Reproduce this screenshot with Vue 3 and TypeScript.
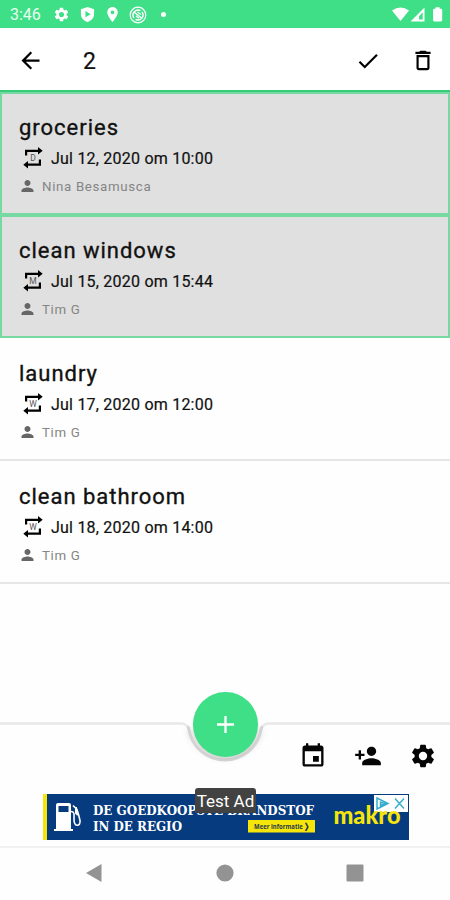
<script setup lang="ts">
interface Task {
  title: string
  repeat: string
  date: string
  person: string
  selected: boolean
}

const tasks: Task[] = [
  { title: 'groceries', repeat: 'D', date: 'Jul 12, 2020 om 10:00', person: 'Nina Besamusca', selected: true },
  { title: 'clean windows', repeat: 'M', date: 'Jul 15, 2020 om 15:44', person: 'Tim G', selected: true },
  { title: 'laundry', repeat: 'W', date: 'Jul 17, 2020 om 12:00', person: 'Tim G', selected: false },
  { title: 'clean bathroom', repeat: 'W', date: 'Jul 18, 2020 om 14:00', person: 'Tim G', selected: false },
]

const gear =
  'M19.14 12.94c.04-.3.06-.61.06-.94 0-.32-.02-.64-.07-.94l2.03-1.58a.49.49 0 0 0 .12-.61l-1.92-3.32a.488.488 0 0 0-.59-.22l-2.39.96c-.5-.38-1.03-.7-1.62-.94l-.36-2.54a.484.484 0 0 0-.48-.41h-3.84c-.24 0-.43.17-.47.41l-.36 2.54c-.59.24-1.13.57-1.62.94l-2.39-.96c-.22-.08-.47 0-.59.22L2.74 8.87c-.12.21-.08.47.12.61l2.03 1.58c-.05.3-.09.63-.09.94s.02.64.07.94l-2.03 1.58a.49.49 0 0 0-.12.61l1.92 3.32c.12.22.37.29.59.22l2.39-.96c.5.38 1.03.7 1.62.94l.36 2.54c.05.24.24.41.48.41h3.84c.24 0 .44-.17.47-.41l.36-2.54c.59-.24 1.13-.56 1.62-.94l2.39.96c.22.08.47 0 .59-.22l1.92-3.32c.12-.22.07-.47-.12-.61l-2.01-1.58zM12 15.6A3.6 3.6 0 1 1 12 8.4a3.6 3.6 0 0 1 0 7.2z'
</script>

<template>
  <div class="screen">
    <header class="status">
      <span class="clock">3:46</span>
      <svg class="s-gear" viewBox="0 0 24 24"><path :d="gear" /></svg>
      <svg class="s-shield" viewBox="0 0 16 18"><path fill-rule="evenodd" d="M8 1 15 3.3V9c0 3.700-3 6.400-7 8-4-1.600-7-4.300-7-8V3.300zM5.800 5.200v6.800l5.600-3.400z" /></svg>
      <svg class="s-pin" viewBox="5 2 14 20"><path d="M12 2C8.130 2 5 5.130 5 9c0 5.250 7 13 7 13s7-7.750 7-13c0-3.870-3.130-7-7-7zm0 9.500a2.500 2.500 0 1 1 0-5 2.500 2.500 0 0 1 0 5z" /></svg>
      <svg class="s-sync" viewBox="0 0 18 18">
        <g fill="none" stroke="#fff"><circle cx="9" cy="9" r="7.800" stroke-width="1.200" /><path stroke-width="1.400" d="M5 12A5 5 0 0 1 11.500 4.700M13 6A5 5 0 0 1 6.500 13.300M5.500 6.500l7 5.500M7 10l3 2.300M8.500 6l3.300 2.500" /></g>
      </svg>
      <i class="s-dot"></i>
      <svg class="s-net" viewBox="0 0 52 18">
        <path d="M1 4.500Q9.500-1.500 18 4.500L9.500 15z" />
        <path fill-rule="evenodd" d="M19.500 15.500 33.500 1.500v14zM28 13.500h3.700V6.500L28 10.200z" />
        <path d="M44.500 1.200h4.200v1.600h1.100c.9 0 1.400.5 1.400 1.400v9.900c0 .9-.5 1.400-1.400 1.400h-6.300c-.9 0-1.400-.5-1.400-1.400V4.200c0-.9.500-1.400 1.400-1.400h1z" />
      </svg>
    </header>

    <div class="toolbar">
      <svg class="back" viewBox="0 0 24 24"><path d="M20 11H7.830l5.590-5.590L12 4l-8 8 8 8 1.410-1.410L7.830 13H20z" /></svg>
      <span class="count">2</span>
      <svg class="check" viewBox="0 0 24 24"><path d="M9 16.170 4.830 12l-1.420 1.410L9 19 21 7l-1.410-1.410z" /></svg>
      <svg class="trash" viewBox="0 0 24 24"><path fill-rule="evenodd" d="M6 19c0 1.100.9 2 2 2h8c1.100 0 2-.9 2-2V7H6zM8 9h8v10H8zM15.500 4l-1-1h-5l-1 1H5v2h14V4z" /></svg>
    </div>

    <main class="list">
      <article v-for="task in tasks" :key="task.title" class="task" :class="{ selected: task.selected }">
        <h2>{{ task.title }}</h2>
        <div class="date">
          <svg viewBox="0 0 20 22">
            <path d="M2 8.500V2.700h13V0l4.700 3.800L15 7.500V4.900H4.200v3.600zM18 12.500v6.300H5v2.700L.3 17.700 5 14v2.600h10.800v-4.100z" />
            <text x="10" y="13.800" text-anchor="middle">{{ task.repeat }}</text>
          </svg>
          <span>{{ task.date }}</span>
        </div>
        <div class="person">
          <svg viewBox="4 4 16 16"><path d="M12 12c2.210 0 4-1.790 4-4s-1.790-4-4-4-4 1.790-4 4 1.790 4 4 4zm0 2c-2.670 0-8 1.340-8 4v2h16v-2c0-2.660-5.330-4-8-4z" /></svg>
          <span>{{ task.person }}</span>
        </div>
      </article>
    </main>

    <div class="bottom">
      <svg class="edge" viewBox="0 0 450 60">
        <path class="haze" d="M190 20A37 37 0 0 0 260 20" />
        <path class="rim" d="M0 13.500H181q5 0 8 5M261 18.500q3-5 8-5H450" />
        <path class="notch" d="M187.500 16.500q1 1 1.500 3A36.500 36.500 0 0 0 261 19.500q.5-2 1.500-3" />
      </svg>
      <button class="fab" aria-label="Add"><svg viewBox="0 0 18 18"><path d="M7.800 0h2.400v7.800H18v2.400h-7.800V18H7.800v-7.800H0V7.800h7.800z" /></svg></button>
      <nav class="actions">
        <svg class="a-cal" viewBox="0 0 24 24"><path fill-rule="evenodd" d="M19 3h-1V1h-2v2H8V1H6v2H5c-1.110 0-2 .9-2 2v14c0 1.100.89 2 2 2h14c1.100 0 2-.9 2-2V5c0-1.100-.9-2-2-2zm0 16H5V8h14zM12 12h5v5h-5z" /></svg>
        <svg class="a-add" viewBox="0 0 24 24"><path d="M15 12c2.210 0 4-1.790 4-4s-1.790-4-4-4-4 1.790-4 4 1.790 4 4 4zM6 10V7H4v3H1v2h3v3h2v-3h3v-2zm9 4c-2.670 0-8 1.340-8 4v2h16v-2c0-2.660-5.330-4-8-4z" /></svg>
        <svg class="a-gear" viewBox="0 0 24 24"><path :d="gear" /></svg>
      </nav>
    </div>

    <div class="ad-row">
      <div class="ad">
        <svg class="ad-art" viewBox="0 0 366 46">
          <rect width="366" height="46" fill="#063b80" />
          <rect width="4" height="46" fill="#f5e50a" />
          <g fill="none" stroke="#fff" stroke-width="1.600">
            <path d="M28 17.500c4 0 3 4 3 8 0 8 7 7 6 1-1-5-2-8-3-11l-4-4" />
            <path stroke-width="2" d="M33 13v6l2 2" />
          </g>
          <path fill="#fff" fill-rule="evenodd" d="M13 11q0-2 2-2h11q2 0 2 2v24h2v2H11v-2h2zM15.500 12v6h10v-6z" />
          <text class="slab" x="50" y="21" textLength="221" lengthAdjust="spacingAndGlyphs">DE GOEDKOOPSTE BRANDSTOF</text>
          <text class="slab" x="50" y="37" textLength="89" lengthAdjust="spacingAndGlyphs">IN DE REGIO</text>
          <rect x="205" y="26" width="67" height="12.500" fill="#f5e50a" />
          <text class="more" x="211" y="35" textLength="56" lengthAdjust="spacingAndGlyphs">Meer informatie ❯</text>
          <path d="M331 1h34v17h-34z" fill="#fff" />
          <text class="makro" x="290.500" y="30" textLength="67" lengthAdjust="spacingAndGlyphs">makro</text>
          <g fill="none" stroke="#36aecb" stroke-width="1.500"><path d="M334 4v11l11-5.500zM337.500 8v3.500l4-2zM352 4.500l9 10M361 4.500l-9 10" /></g>
        </svg>
        <span class="test">Test Ad</span>
      </div>
    </div>

    <footer class="sysnav">
      <svg viewBox="0 0 18 20"><path d="M16.500 1v18L1 10z" /></svg>
      <svg viewBox="0 0 18 20"><circle cx="9" cy="10" r="8.600" /></svg>
      <svg viewBox="0 0 18 20"><rect x=".5" y="1.500" width="17" height="17" rx="1" /></svg>
    </footer>
  </div>
</template>

<style>
body {
  background: #fff;
}
</style>

<style scoped>
* {
  box-sizing: border-box;
}
.screen {
  width: 450px;
  height: 900px;
  display: flex;
  flex-direction: column;
  overflow: hidden;
  background: #fefefe;
  font-family: Roboto, sans-serif;
  color: #111;
}
svg {
  display: block;
  flex: none;
}
.status {
  height: 28px;
  flex: none;
  display: flex;
  align-items: center;
  padding: 1px 7px 0 10px;
  background: #3fdf87;
  fill: #fff;
  color: #e9fff2;
}
.clock {
  width: 44px;
  font-size: 16px;
  line-height: 20px;
}
.s-gear { width: 17px; height: 17px; margin-left: -1px; }
.s-shield { width: 15px; height: 17px; margin-left: 10px; }
.s-pin { width: 11px; height: 15px; margin-left: 12px; }
.s-sync { width: 18px; height: 18px; margin-left: 11px; }
.s-dot {
  width: 5px;
  height: 5px;
  margin-left: 14px;
  border-radius: 50%;
  background: #fff;
}
.s-net { width: 52px; height: 18px; margin-left: auto; }
.toolbar {
  height: 62px;
  flex: none;
  display: flex;
  align-items: center;
  padding: 3px 14px 0 17px;
  background: #fff;
}
.back { width: 27px; height: 27px; }
.count {
  margin-left: 39px;
  font-size: 23px;
  line-height: 30px;
  padding-top: 2px;
  -webkit-text-stroke: 0.2px #111;
}
.check { width: 26px; height: 26px; margin-left: auto; }
.trash { width: 26px; height: 27px; margin-left: 29px; }
.list {
  flex: none;
  border-top: 2px solid #35cc79;
}
.task {
  height: 123px;
  padding: 21px 19px 0;
  border-bottom: 2px solid #e6e6e6;
}
.task.selected {
  background: #e0e0e0;
  border: 2px solid #77d9a2;
  padding: 19px 17px 0;
}
h2 {
  margin: 0;
  font-size: 22px;
  line-height: 29px;
  font-weight: 400;
  letter-spacing: 0.98px;
  -webkit-text-stroke: 0.35px #111;
}
.date {
  display: flex;
  align-items: center;
  height: 22px;
  margin-top: 5px;
  padding-left: 4px;
  font-size: 16px;
  letter-spacing: 0.22px;
  -webkit-text-stroke: 0.2px #111;
}
.date svg {
  width: 20px;
  height: 22px;
  margin-right: 8px;
}
.date text {
  font: 8.5px Roboto, sans-serif;
  letter-spacing: 0;
  fill: #555;
  -webkit-text-stroke: 0;
}
.person {
  display: flex;
  align-items: center;
  height: 20px;
  margin-top: 7px;
  padding-left: 2px;
  font-size: 13.3px;
  letter-spacing: 0.66px;
  color: #858585;
}
.person svg {
  width: 13px;
  height: 12px;
  margin-right: 8px;
  fill: #666;
}
.bottom {
  position: relative;
  height: 80px;
  flex: none;
  margin-top: 130px;
}
.edge {
  position: absolute;
  left: 0;
  top: -4px;
  width: 450px;
  height: 60px;
  overflow: visible;
  fill: none;
}
.rim { stroke: #e8e8e8; stroke-width: 2.5; }
.notch { stroke: #d3d3d3; stroke-width: 3; }
.haze { stroke: #dedede; stroke-width: 6; filter: blur(3px); }
.fab {
  position: absolute;
  left: 193px;
  top: -22px;
  width: 64.5px;
  height: 64.5px;
  padding: 0;
  display: grid;
  place-items: center;
  border: 0;
  border-radius: 50%;
  background: #3fdf87;
  box-shadow: 0 2px 2px #00000018;
}
.fab svg { width: 17px; height: 17px; fill: #fff; }
.actions {
  display: flex;
  align-items: center;
  justify-content: flex-end;
  height: 80px;
  padding: 4px 13px 0 0;
  fill: #050505;
}
.a-cal { width: 28px; height: 28px; }
.a-add { width: 28px; height: 28px; margin-left: 27px; }
.a-gear { width: 28px; height: 28px; margin-left: 27px; }
.ad-row {
  flex: none;
  height: 52px;
  display: flex;
  justify-content: center;
  padding-left: 2px;
}
.ad {
  position: relative;
  width: 366px;
  height: 46px;
}
.ad-art { width: 366px; height: 46px; }
.slab {
  font: bold 13.5px "DejaVu Serif", serif;
  fill: #fff;
}
.more {
  font: bold 7.5px "Open Sans", sans-serif;
  fill: #27394a;
}
.makro {
  font: 900 24px Lato, sans-serif;
  fill: #f5e50a;
}
.test {
  position: absolute;
  left: 152px;
  top: -6px;
  width: 61px;
  height: 25px;
  border-radius: 3px 3px 0 0;
  background: #424242;
  color: #fff;
  font-size: 17px;
  line-height: 27px;
  text-align: center;
  white-space: nowrap;
}
.sysnav {
  flex: 1;
  display: flex;
  justify-content: space-between;
  align-items: flex-start;
  padding: 15px 86px 0 85px;
  border-top: 2px solid #f1f1f1;
  fill: #939393;
}
.sysnav svg { width: 18px; height: 20px; }
</style>
